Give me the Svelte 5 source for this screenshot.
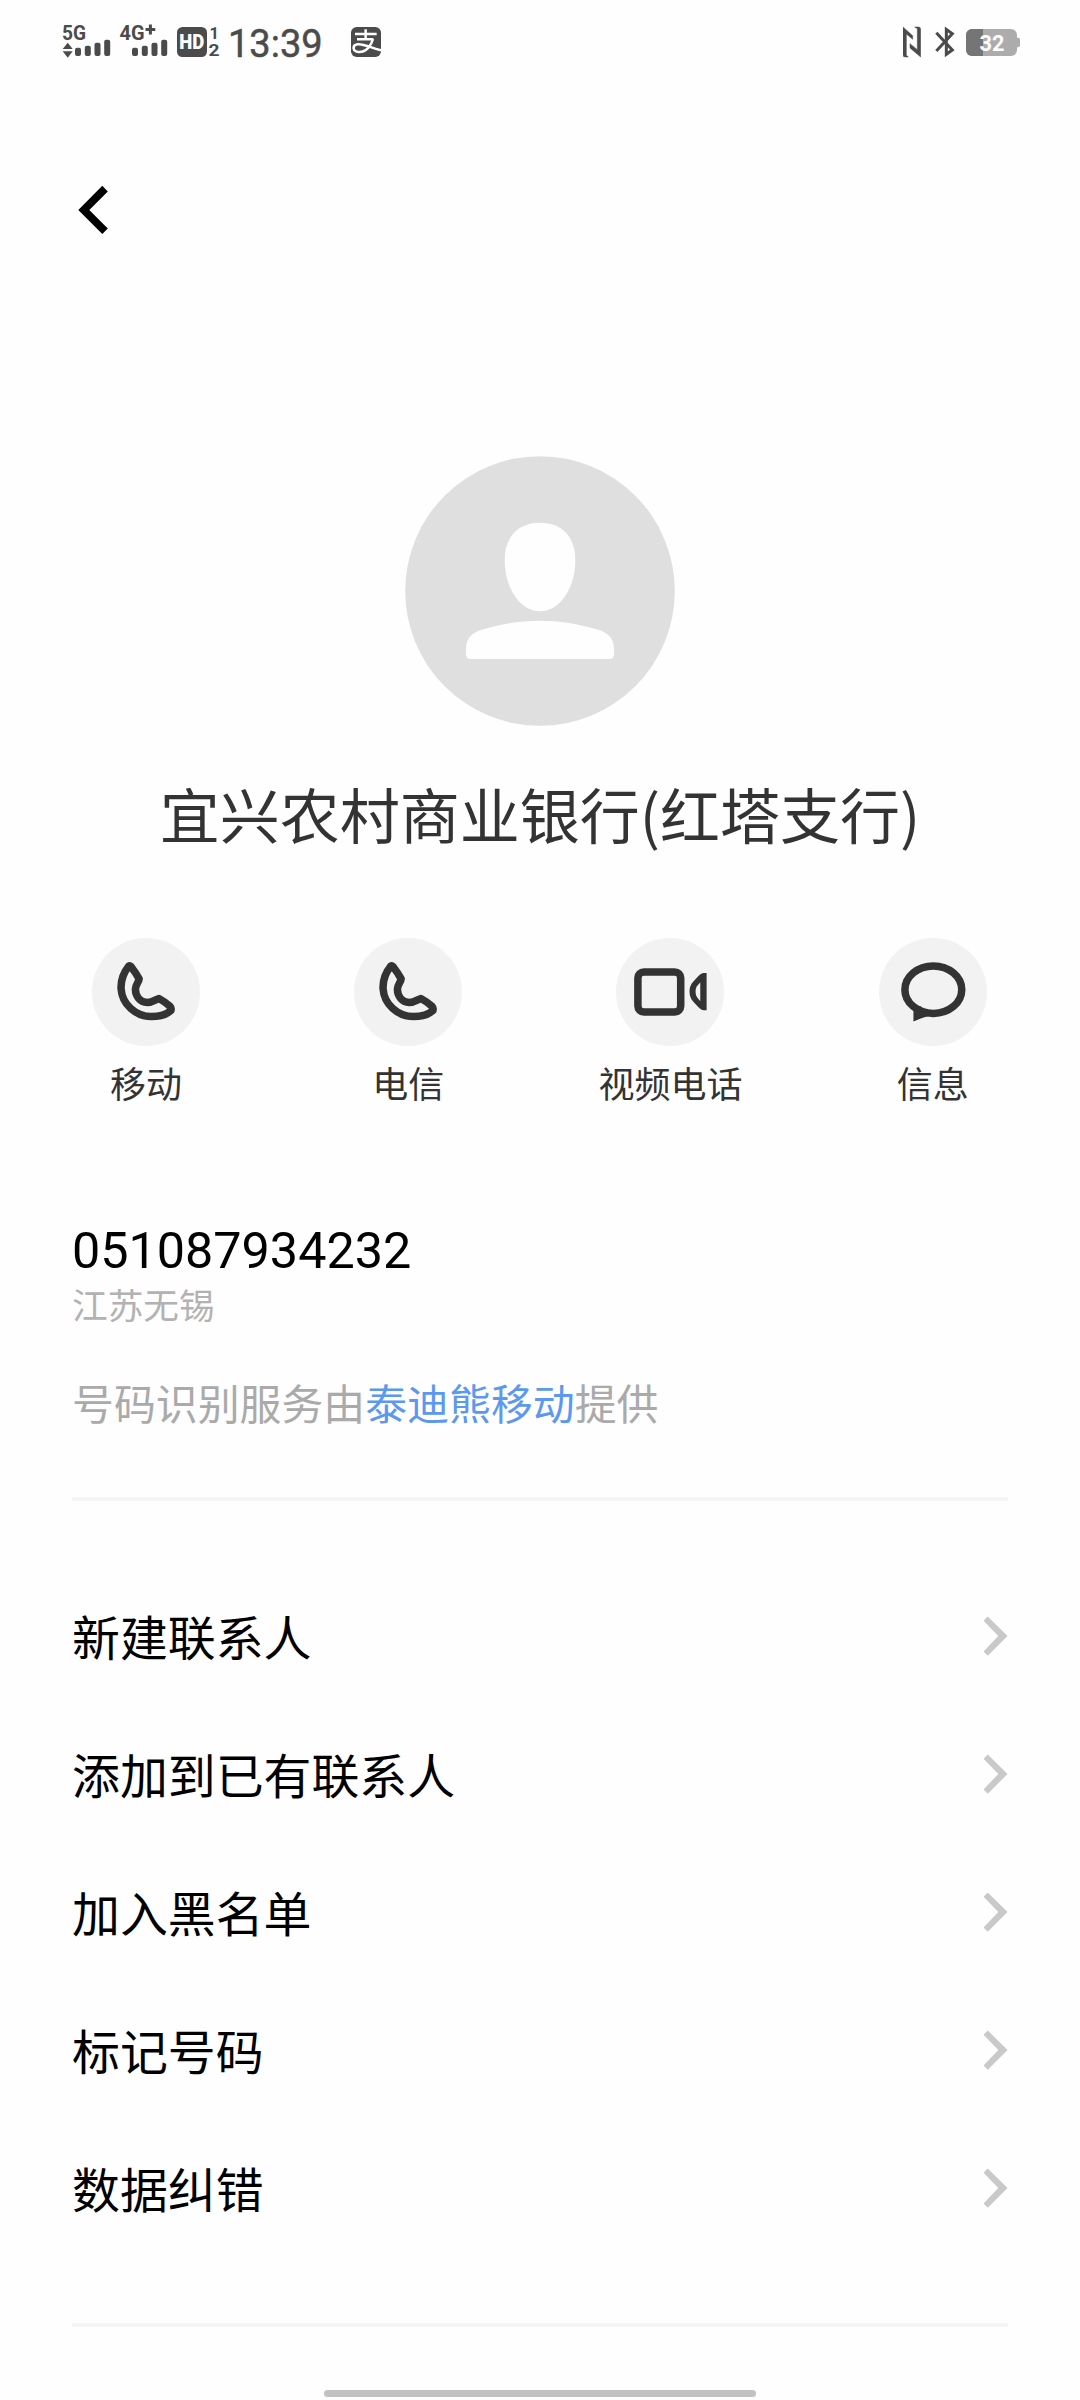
<script>
  const actions = [
    { label: '移动', icon: 'phone' },
    { label: '电信', icon: 'phone' },
    { label: '视频电话', icon: 'video' },
    { label: '信息', icon: 'message' }
  ];
  const menu = ['新建联系人', '添加到已有联系人', '加入黑名单', '标记号码', '数据纠错'];
  const bars = [
    { x: 0, h: 8.3 },
    { x: 9.8, h: 10.3 },
    { x: 19.5, h: 13.3 },
    { x: 29.2, h: 16.3 }
  ];
</script>

<div class="screen">
  <header class="status">
    <div class="cluster">
      <svg class="sig" width="50" height="38" viewBox="62 22 50 38">
        <text x="62" y="39.5" class="net" textLength="24" lengthAdjust="spacingAndGlyphs">5G</text>
        <path d="M62.7 49 L67.7 42.7 L72.7 49Z M62.7 51.3 L67.7 57.7 L72.7 51.3Z" />
        {#each bars as b}
          <rect x={75 + b.x} y={56 - b.h} width="6" height={b.h} rx="2" />
        {/each}
      </svg>
      <svg class="sig" width="50" height="38" viewBox="119 22 50 38">
        <text x="119.5" y="39.5" class="net" textLength="25" lengthAdjust="spacingAndGlyphs">4G</text>
        <path d="M145.500 28h3.400v-3.600h3v3.600h3.400v3h-3.400v3.600h-3v-3.600h-3.400z" />
        {#each bars as b}
          <rect x={132 + b.x} y={56 - b.h} width="6" height={b.h} rx="2" />
        {/each}
      </svg>
      <svg class="sig" width="45" height="38" viewBox="176 22 45 38">
        <rect x="177" y="27" width="30" height="30" rx="5.5" />
        <text x="179.2" y="49" class="hd" textLength="25" lengthAdjust="spacingAndGlyphs">HD</text>
        <text x="209.6" y="38.6" class="sim">1</text>
        <text x="208.6" y="56.2" class="sim" textLength="11" lengthAdjust="spacingAndGlyphs">2</text>
      </svg>
      <span class="time">13:39</span>
      <svg class="pay" width="30" height="38" viewBox="903 36 90 114">
        <rect x="903" y="51" width="90" height="90" rx="17" fill="#4b4b4b" />
        <g fill="none" stroke="#fefefe" stroke-width="7.5">
          <path d="M915 72H980M947 58V89M921 88H970" />
          <path d="M969 87C964 105 950 127 926 126C907 125 906 106 922 103C940 100 960 113 993 121" />
        </g>
      </svg>
    </div>
    <div class="cluster">
      <svg width="18" height="38" viewBox="70 36 54 114">
        <path fill="#4b4b4b" stroke="#4b4b4b" stroke-width="1.5" d="M70 51L99 77V88L80 72V136L86 141H76Q70 141 70 134ZM105 51H116Q123 51 123 58V141L91 114V101L113 119V56Z" />
      </svg>
      <svg class="bt" width="20" height="38" viewBox="165 36 60 114">
        <path fill="none" stroke="#4b4b4b" stroke-width="9" d="M169 68L217 120L199 133V58L217 71L169 123" />
      </svg>
      <svg class="battery" width="54" height="38" viewBox="966 24 54 38">
        <clipPath id="shell"><rect x="966" y="31" width="51" height="27" rx="6" /></clipPath>
        <g clip-path="url(#shell)">
          <rect x="966" y="31" width="51" height="27" fill="#acacac" />
          <rect x="966" y="31" width="17" height="27" fill="#757575" />
        </g>
        <path d="M1017 39.700h1q2 0 2 2v5.600q0 2-2 2h-1z" fill="#acacac" />
        <text x="979.6" y="53.2" class="level" textLength="25" lengthAdjust="spacingAndGlyphs">32</text>
      </svg>
    </div>
  </header>

  <nav class="nav">
    <svg width="30" height="50" viewBox="78 185 30 50">
      <path d="M78.3 210L102.3 185.8L107.8 191.5L89.3 210L107.8 228.4L102.3 234Z" />
    </svg>
  </nav>

  <section class="profile">
    <svg class="avatar" width="270" height="270" viewBox="405 456 270 270">
      <circle cx="540" cy="591" r="134.8" fill="#dfdfdf" />
      <path fill="#fefefe" d="M540 522.8C562 522.8 575.3 537 575.3 560C575.3 588 560 611.3 540 611.3C520 611.3 504.7 588 504.7 560C504.7 537 518 522.8 540 522.8Z" />
      <path fill="#fefefe" d="M466 654V649C466 638 473 632 482 629.8C501 624 521 620.8 540 620.8C559 620.8 579 624 598 629.8C607 632 614 638 614 649V654Q614 659 609 659H471Q466 659 466 654Z" />
    </svg>
    <h1>宜兴农村商业银行(红塔支行)</h1>
  </section>

  <section class="actions">
    {#each actions as a}
      <div class="action">
        <div class="round">
          {#if a.icon === 'phone'}
            <svg width="108" height="108" viewBox="97 55 323 323">
              <path class="line" d="M207 139C190 160 183 185 184 207C187 253 228 290 275 290C300 290 321 283 333 272Q335 264 331 260Q316 246 297 236C286 239 279 248 262 248C241 247 226 229 227 207C228 194 237 187 238 177Q227 158 214 141Q210 137 207 139Z" />
            </svg>
          {:else if a.icon === 'video'}
            <svg width="108" height="108" viewBox="108 55 323 323">
              <rect class="line" x="173.500" y="156.500" width="128" height="120" rx="18" />
              <path fill="#333" fill-rule="evenodd" d="M379 160H370C362 161 356 167 347 177C338 187 328 195 328 215C328 236 338 244 347 254C356 264 362 270 370 271H379ZM360 187V244C355 236 346 233 346 215C346 198 355 195 360 187Z" />
            </svg>
          {:else}
            <svg width="108" height="108" viewBox="897 55 323 323">
              <ellipse class="line" cx="1059.500" cy="209.500" rx="85" ry="71" />
              <path fill="#333" d="M1000 258L1023 259L1021 274L1042 267L1044 289C1029 292 1015 299 1000 305Z" />
            </svg>
          {/if}
        </div>
        <span>{a.label}</span>
      </div>
    {/each}
  </section>

  <section class="info">
    <div class="number">051087934232</div>
    <div class="place">江苏无锡</div>
    <p>号码识别服务由<a href="#provider">泰迪熊移动</a>提供</p>
  </section>

  <ul class="menu">
    {#each menu as item}
      <li>
        <span>{item}</span>
        <svg width="24" height="40" viewBox="984 1616 24 40">
          <path fill="#c9c9c9" d="M1007.500 1636L987.800 1616.500L983.500 1620.800L998.300 1636L983.500 1651.500L987.800 1655.800Z" />
        </svg>
      </li>
    {/each}
  </ul>

  <div class="home"></div>
</div>

<style>
  :global(body) {
    background: #fefefe;
  }
  .screen {
    box-sizing: border-box;
    width: 1080px;
    height: 2400px;
    overflow: hidden;
    display: flex;
    flex-direction: column;
    background: #fefefe;
    color: #000;
    font-family: 'Noto Sans CJK SC', sans-serif;
  }
  svg {
    display: block;
    flex: none;
  }
  .status {
    box-sizing: border-box;
    height: 84px;
    padding: 22px 60px 0 62px;
    display: flex;
    justify-content: space-between;
  }
  .cluster {
    display: flex;
    gap: 7px;
  }
  .sig {
    fill: #4b4b4b;
  }
  .net,
  .hd,
  .sim,
  .level {
    font-family: Roboto, sans-serif;
    font-weight: 700;
  }
  .net {
    font-size: 20px;
  }
  .hd {
    font-size: 20px;
    font-weight: 900;
    fill: #fefefe;
  }
  .sim {
    font-size: 16.5px;
  }
  .level {
    font-size: 22.5px;
    fill: #fefefe;
  }
  .time {
    width: 116px;
    height: 38px;
    line-height: 44px;
    font-family: Roboto, sans-serif;
    font-size: 38px;
    color: #4b4b4b;
    -webkit-text-stroke: 0.5px #4b4b4b;
  }
  .bt {
    margin: 0 4px 0 7px;
  }
  .nav {
    box-sizing: border-box;
    height: 372px;
    padding: 101px 78px 0;
  }
  .profile {
    height: 482px;
    display: flex;
    flex-direction: column;
    align-items: center;
  }
  h1 {
    margin: 42px 0 0;
    font-size: 60px;
    line-height: 90px;
    font-weight: 400;
    color: #333;
    white-space: nowrap;
  }
  .actions {
    height: 262px;
    padding: 0 15px;
    display: grid;
    grid-template-columns: repeat(4, 262.2px);
  }
  .action {
    display: flex;
    flex-direction: column;
    align-items: center;
    gap: 9px;
    font-size: 36px;
    line-height: 54px;
    color: #333;
  }
  .round {
    width: 108px;
    height: 108px;
    border-radius: 50%;
    background: #f2f2f2;
  }
  .line {
    fill: none;
    stroke: #333;
    stroke-width: 22.5;
    stroke-linejoin: round;
  }
  .info {
    box-sizing: border-box;
    height: 301px;
    margin: 0 72px;
    padding-top: 21px;
    border-bottom: 4px solid #f5f5f5;
  }
  .number {
    font-family: Roboto, sans-serif;
    font-size: 50.3px;
    line-height: 60px;
  }
  .place {
    margin-top: -2px;
    font-size: 35.7px;
    line-height: 50px;
    color: #b2b2b2;
  }
  p {
    margin: 43px 0 0;
    font-size: 41.9px;
    line-height: 60px;
    color: #aaa;
  }
  a {
    color: #5b98ee;
    text-decoration: none;
  }
  .menu {
    box-sizing: border-box;
    height: 826px;
    margin: 0 72px;
    padding: 66px 0 0;
    list-style: none;
    border-bottom: 4px solid #f5f5f5;
  }
  li {
    height: 138px;
    display: flex;
    align-items: center;
    justify-content: space-between;
    font-size: 47.9px;
    line-height: 72px;
  }
  li span {
    padding-bottom: 3px;
  }
  .home {
    width: 432px;
    height: 7px;
    margin: 63px auto 0;
    border-radius: 4px;
    background: #c2c2c2;
  }
</style>
